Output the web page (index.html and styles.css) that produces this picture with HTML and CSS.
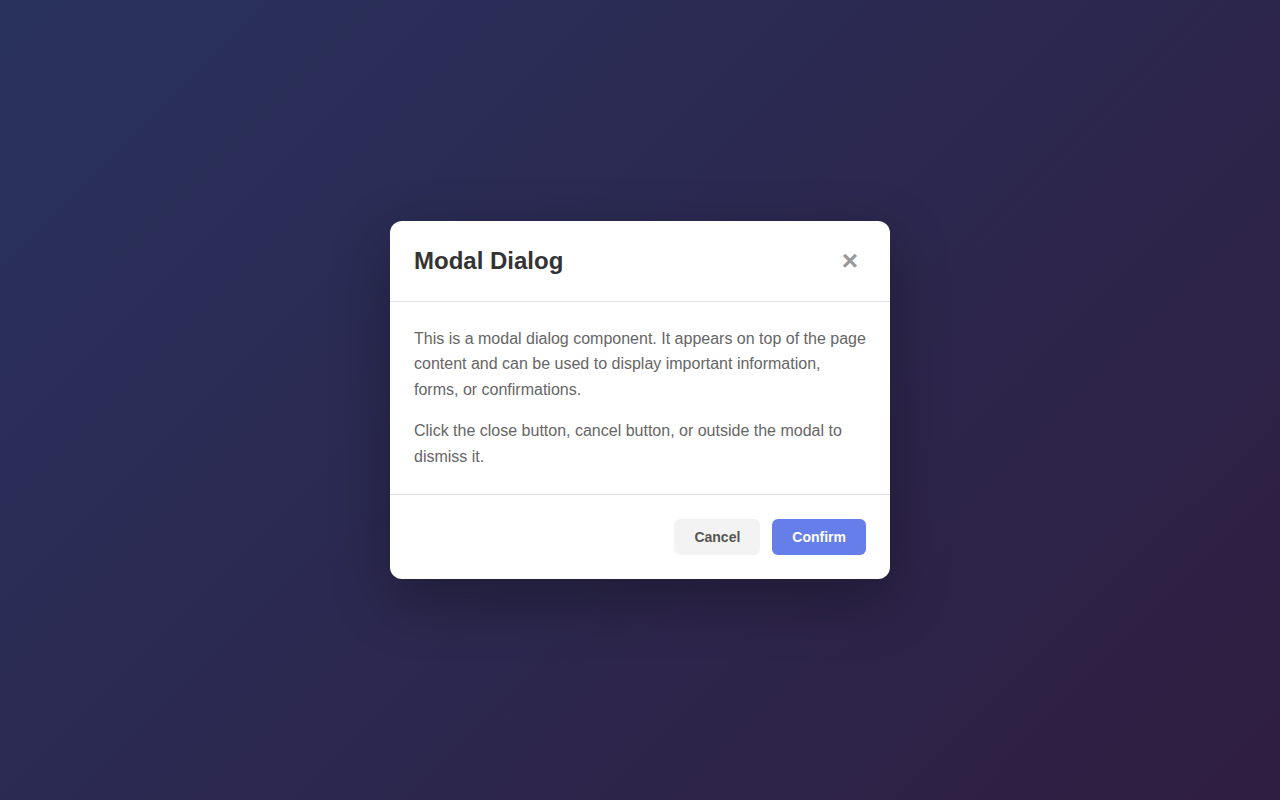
FILE: index.html
```html
<!DOCTYPE html>
<html lang="en">
<head>
<meta charset="utf-8">
<title>Modal Dialog</title>
<link rel="stylesheet" href="styles.css">
</head>
<body>
<div class="page">
  <div class="overlay">
    <div class="modal" role="dialog" aria-labelledby="modal-title">
      <div class="modal-header">
        <h2 class="modal-title" id="modal-title">Modal Dialog</h2>
        <button class="close-btn" aria-label="Close">&times;</button>
      </div>
      <div class="modal-body">
        <p>This is a modal dialog component. It appears on top of the page content and can be used to display important information, forms, or confirmations.</p>
        <p>Click the close button, cancel button, or outside the modal to dismiss it.</p>
      </div>
      <div class="modal-footer">
        <button class="btn btn-cancel">Cancel</button>
        <button class="btn btn-confirm">Confirm</button>
      </div>
    </div>
  </div>
</div>
</body>
</html>
```
FILE: styles.css
```css
* { box-sizing: border-box; }
html, body { margin: 0; padding: 0; height: 100%; }
body {
  font-family: "Liberation Sans", Arial, sans-serif;
  background: linear-gradient(135deg, #667eea 0%, #764ba2 100%);
  min-height: 100vh;
}
.page { height: 100vh; }
.overlay {
  height: 100%;
  background: rgba(0, 0, 0, 0.6);
  display: flex;
  align-items: center;
  justify-content: center;
}
.modal {
  width: 500px;
  background: #fff;
  border-radius: 12px;
  box-shadow: 0 20px 60px rgba(0, 0, 0, 0.3);
  overflow: hidden;
}
.modal-header {
  display: flex;
  align-items: center;
  justify-content: space-between;
  padding: 24px;
  border-bottom: 1px solid #e0e0e0;
}
.modal-title {
  margin: 0;
  font-size: 24px;
  font-weight: 700;
  color: #333;
  line-height: 32px;
}
.close-btn {
  width: 32px;
  height: 32px;
  border: none;
  background: transparent;
  color: #999;
  font-family: "Liberation Sans", Arial, sans-serif;
  font-size: 28px;
  line-height: 30px;
  padding: 0;
  cursor: pointer;
  font-weight: 700;
}
.modal-body {
  padding: 24px 24px 25px;
  color: #666;
  font-size: 16px;
  line-height: 1.6;
}
.modal-body p { margin: 0 0 16px; }
.modal-body p:last-child { margin-bottom: 0; }
.modal-footer {
  display: flex;
  justify-content: flex-end;
  gap: 12px;
  padding: 24px;
  border-top: 1px solid #e0e0e0;
}
.btn {
  font-family: "Liberation Sans", Arial, sans-serif;
  font-size: 14px;
  font-weight: 700;
  line-height: 16px;
  padding: 10px 20px;
  border: none;
  border-radius: 6px;
  cursor: pointer;
}
.btn-cancel { background: #f3f3f3; color: #555; }
.btn-confirm { background: #667eea; color: #fff; }
```
